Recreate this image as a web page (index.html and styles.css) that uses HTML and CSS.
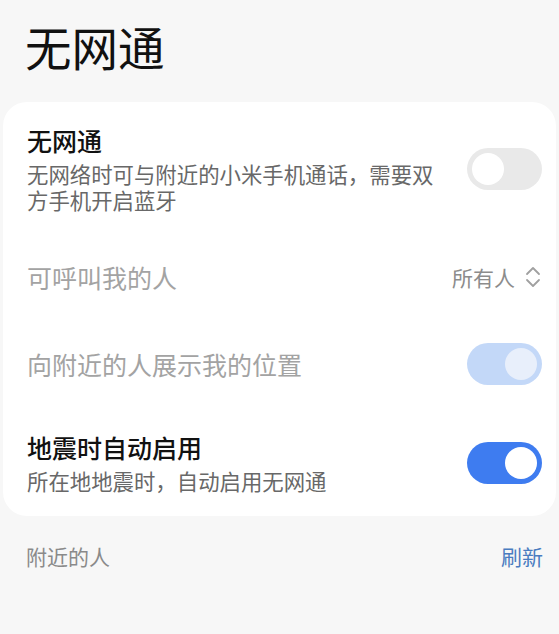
FILE: index.html
```html
<!DOCTYPE html>
<html lang="zh-CN">

<head>
    <meta charset="UTF-8">
    <meta name="viewport" content="width=device-width, initial-scale=1.0">
    <title>无网通</title>
    <link rel="stylesheet" href="styles.css">
</head>

<body>
    <h1 class="page-title">无网通</h1>

    <div class="card">
        <div class="row">
            <div class="row-text">
                <div class="row-title">无网通</div>
                <div class="row-sub">无网络时可与附近的小米手机通话，需要双方手机开启蓝牙</div>
            </div>
            <span class="switch"><span class="knob"></span></span>
        </div>

        <div class="row disabled">
            <div class="row-text">
                <div class="row-title">可呼叫我的人</div>
            </div>
            <div class="row-value">
                所有人
                <svg class="updown" width="16" height="26" viewBox="0 0 16 26">
                    <path d="M2 10 L8 4 L14 10" fill="none" stroke="#a0a0a0" stroke-width="1.8" stroke-linecap="round" stroke-linejoin="round"/>
                    <path d="M2 16 L8 22 L14 16" fill="none" stroke="#a0a0a0" stroke-width="1.8" stroke-linecap="round" stroke-linejoin="round"/>
                </svg>
            </div>
        </div>

        <div class="row disabled">
            <div class="row-text">
                <div class="row-title">向附近的人展示我的位置</div>
            </div>
            <span class="switch on dim"><span class="knob"></span></span>
        </div>

        <div class="row">
            <div class="row-text">
                <div class="row-title">地震时自动启用</div>
                <div class="row-sub">所在地地震时，自动启用无网通</div>
            </div>
            <span class="switch on"><span class="knob"></span></span>
        </div>
    </div>

    <div class="section-head">
        <span class="section-label">附近的人</span>
        <span class="section-action">刷新</span>
    </div>
</body>

</html>
```

FILE: styles.css
```css
/* Base */
body {
    margin: 0;
    background-color: #f7f7f7;
    font-family: "Noto Sans CJK SC", "Noto Sans", sans-serif;
    color: #111;
}

.page-title {
    margin: 0;
    padding: 18px 0 0 25px;
    height: 82px;
    box-sizing: border-box;
    font-size: 46.5px;
    line-height: 56px;
    font-weight: 400;
}

/* Settings card */
.card {
    margin: 20px 3px 0 3px;
    padding: 0 14px 0 24px;
    background-color: #fff;
    border-radius: 24px;
}

.row {
    display: flex;
    align-items: center;
    justify-content: space-between;
    min-height: 84px;
    padding: 24px 0;
    box-sizing: border-box;
}

.row:first-child {
    padding-top: 23px;
    padding-bottom: 22px;
}

.row:last-child {
    padding-top: 23px;
    padding-bottom: 22px;
}

.row-text {
    flex: 1;
    padding-right: 22px;
}

.row-title {
    font-size: 25px;
    line-height: 30px;
    font-weight: 500;
}

.row-sub {
    margin-top: 6px;
    font-size: 21.4px;
    line-height: 26px;
    color: #686868;
}

.row.disabled .row-title {
    font-weight: 400;
    font-size: 25px;
    color: #a3a3a3;
}

.row-value {
    display: flex;
    align-items: center;
    gap: 10px;
    font-size: 21px;
    line-height: 30px;
    color: #8c8c8c;
    margin-right: 1px;
}

.updown {
    display: block;
}

/* Switches */
.switch {
    flex: none;
    position: relative;
    width: 75px;
    height: 42px;
    border-radius: 21px;
    background-color: #e9e9e9;
}

.switch .knob {
    position: absolute;
    top: 5px;
    left: 5px;
    width: 32px;
    height: 32px;
    border-radius: 50%;
    background-color: #fff;
}

.switch.on {
    background-color: #3e7cf0;
}

.switch.on .knob {
    left: 38px;
}

.switch.dim {
    background-color: #c3d8f8;
}

.switch.dim .knob {
    background-color: #e8effb;
}

/* Nearby section */
.section-head {
    display: flex;
    justify-content: space-between;
    align-items: center;
    padding: 25px 16px 0 26px;
    font-size: 21px;
    line-height: 30px;
}

.section-label {
    color: #8a8a8a;
}

.section-action {
    color: #4a7cc0;
}
```
